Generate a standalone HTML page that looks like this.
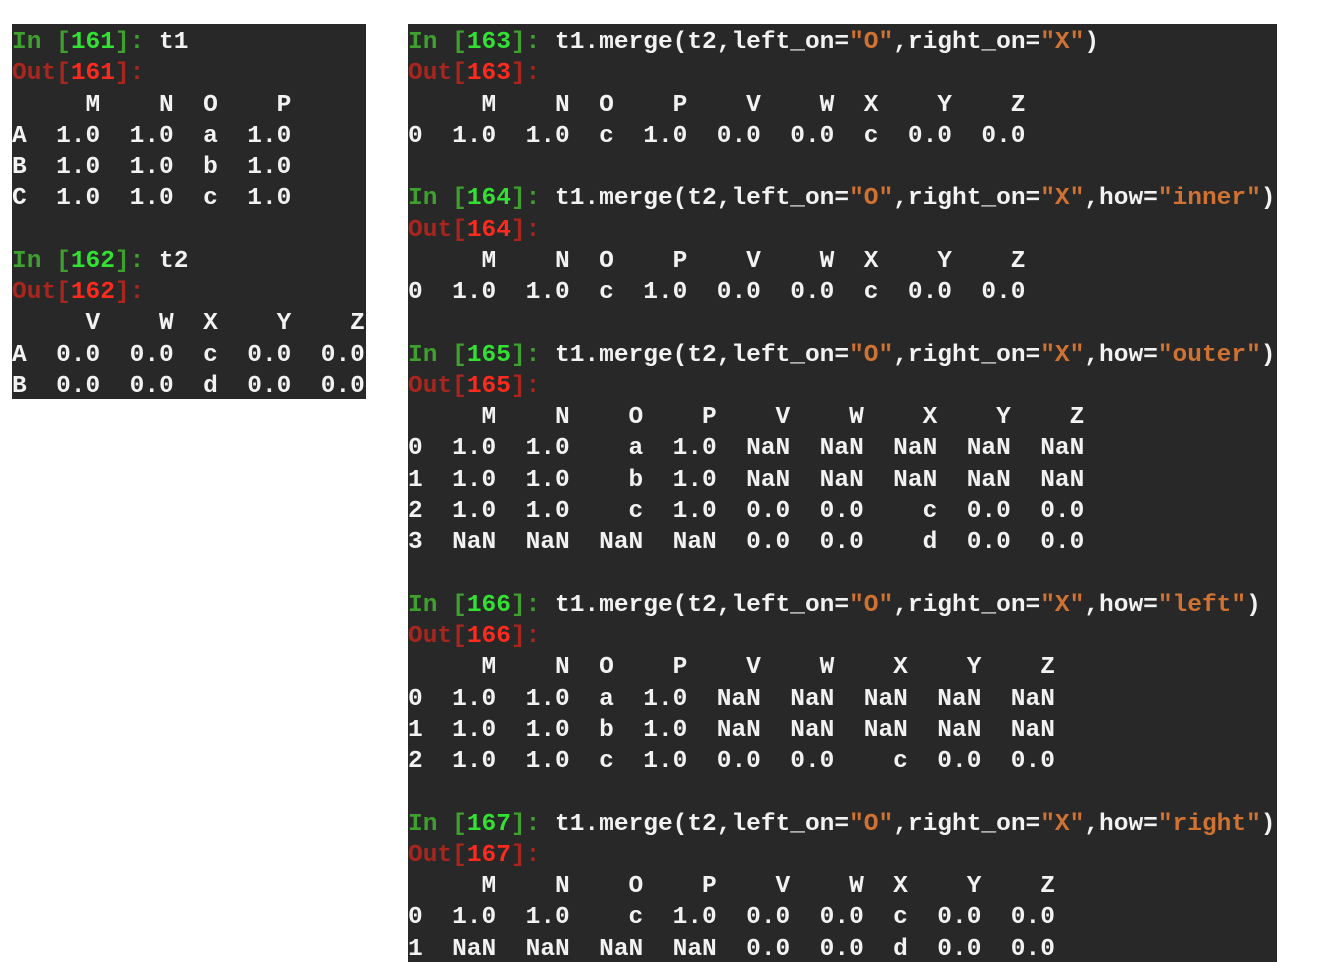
<!DOCTYPE html>
<html><head><meta charset="utf-8"><style>
html,body{margin:0;padding:0;background:#fff;width:1324px;height:962px;overflow:hidden}
pre{position:absolute;margin:0;padding-top:3px;box-sizing:border-box;background:#282828;color:#f2f2f2;font-family:"Liberation Mono",monospace;font-size:24.5px;line-height:31.27px;font-weight:bold;overflow:hidden}
.g{color:#3f9f2f}.G{color:#33e133}.r{color:#a8261e}.R{color:#ff2a1e}.s{color:#cf7232}
</style></head><body>
<pre style="left:12px;top:24px;width:354px;height:375px"><span class="g">In [</span><span class="G">161</span><span class="g">]: </span>t1
<span class="r">Out[</span><span class="R">161</span><span class="r">]:</span>
     M    N  O    P
A  1.0  1.0  a  1.0
B  1.0  1.0  b  1.0
C  1.0  1.0  c  1.0

<span class="g">In [</span><span class="G">162</span><span class="g">]: </span>t2
<span class="r">Out[</span><span class="R">162</span><span class="r">]:</span>
     V    W  X    Y    Z
A  0.0  0.0  c  0.0  0.0
B  0.0  0.0  d  0.0  0.0</pre>
<pre style="left:408px;top:24px;width:869px;height:938px"><span class="g">In [</span><span class="G">163</span><span class="g">]: </span>t1.merge(t2,left_on=<span class="s">"O"</span>,right_on=<span class="s">"X"</span>)
<span class="r">Out[</span><span class="R">163</span><span class="r">]:</span>
     M    N  O    P    V    W  X    Y    Z
0  1.0  1.0  c  1.0  0.0  0.0  c  0.0  0.0

<span class="g">In [</span><span class="G">164</span><span class="g">]: </span>t1.merge(t2,left_on=<span class="s">"O"</span>,right_on=<span class="s">"X"</span>,how=<span class="s">"inner"</span>)
<span class="r">Out[</span><span class="R">164</span><span class="r">]:</span>
     M    N  O    P    V    W  X    Y    Z
0  1.0  1.0  c  1.0  0.0  0.0  c  0.0  0.0

<span class="g">In [</span><span class="G">165</span><span class="g">]: </span>t1.merge(t2,left_on=<span class="s">"O"</span>,right_on=<span class="s">"X"</span>,how=<span class="s">"outer"</span>)
<span class="r">Out[</span><span class="R">165</span><span class="r">]:</span>
     M    N    O    P    V    W    X    Y    Z
0  1.0  1.0    a  1.0  NaN  NaN  NaN  NaN  NaN
1  1.0  1.0    b  1.0  NaN  NaN  NaN  NaN  NaN
2  1.0  1.0    c  1.0  0.0  0.0    c  0.0  0.0
3  NaN  NaN  NaN  NaN  0.0  0.0    d  0.0  0.0

<span class="g">In [</span><span class="G">166</span><span class="g">]: </span>t1.merge(t2,left_on=<span class="s">"O"</span>,right_on=<span class="s">"X"</span>,how=<span class="s">"left"</span>)
<span class="r">Out[</span><span class="R">166</span><span class="r">]:</span>
     M    N  O    P    V    W    X    Y    Z
0  1.0  1.0  a  1.0  NaN  NaN  NaN  NaN  NaN
1  1.0  1.0  b  1.0  NaN  NaN  NaN  NaN  NaN
2  1.0  1.0  c  1.0  0.0  0.0    c  0.0  0.0

<span class="g">In [</span><span class="G">167</span><span class="g">]: </span>t1.merge(t2,left_on=<span class="s">"O"</span>,right_on=<span class="s">"X"</span>,how=<span class="s">"right"</span>)
<span class="r">Out[</span><span class="R">167</span><span class="r">]:</span>
     M    N    O    P    V    W  X    Y    Z
0  1.0  1.0    c  1.0  0.0  0.0  c  0.0  0.0
1  NaN  NaN  NaN  NaN  0.0  0.0  d  0.0  0.0</pre>
</body></html>
